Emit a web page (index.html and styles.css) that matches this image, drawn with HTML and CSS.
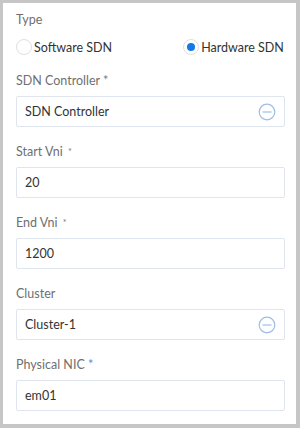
FILE: index.html
```html
<!DOCTYPE html>
<html lang="en">
<head>
    <meta charset="UTF-8">
    <meta name="viewport" content="width=device-width, initial-scale=1.0">
    <title>SDN Settings</title>
    <link rel="stylesheet" href="styles.css">
</head>
<body>
    <div class="panel">
        <div class="field field-type">
            <div class="label">Type</div>
            <div class="radio-row">
                <label class="radio">
                    <span class="radio-dot"></span>
                    <span class="radio-text">Software SDN</span>
                </label>
                <label class="radio checked">
                    <span class="radio-dot"></span>
                    <span class="radio-text">Hardware SDN</span>
                </label>
            </div>
        </div>

        <div class="field">
            <div class="label">SDN Controller <span class="req">*</span></div>
            <div class="input">
                <span class="value">SDN Controller</span>
                <svg class="clear-icon" width="18" height="18" viewBox="0 0 18 18">
                    <circle cx="9" cy="9" r="7.8" fill="none" stroke="#9fbde8" stroke-width="1.2"/>
                    <line x1="4.5" y1="9" x2="13.5" y2="9" stroke="#9fbde8" stroke-width="1.2"/>
                </svg>
            </div>
        </div>

        <div class="field">
            <div class="label">Start Vni <span class="req small">*</span></div>
            <div class="input"><span class="value">20</span></div>
        </div>

        <div class="field">
            <div class="label">End Vni <span class="req small">*</span></div>
            <div class="input"><span class="value">1200</span></div>
        </div>

        <div class="field">
            <div class="label">Cluster</div>
            <div class="input">
                <span class="value">Cluster-1</span>
                <svg class="clear-icon" width="18" height="18" viewBox="0 0 18 18">
                    <circle cx="9" cy="9" r="7.8" fill="none" stroke="#9fbde8" stroke-width="1.2"/>
                    <line x1="4.5" y1="9" x2="13.5" y2="9" stroke="#9fbde8" stroke-width="1.2"/>
                </svg>
            </div>
        </div>

        <div class="field">
            <div class="label">Physical NIC <span class="req blue">*</span></div>
            <div class="input"><span class="value">em01</span></div>
        </div>
    </div>
</body>
</html>
```

FILE: styles.css
```css
* {
    margin: 0;
    padding: 0;
    box-sizing: border-box;
}

body {
    font-family: Lato, 'Open Sans', sans-serif;
    font-size: 12.5px;
    background: #c6c6c6;
    height: 428px;
    overflow: hidden;
}

.panel {
    background: #ffffff;
    margin: 3px 4px 0 3px;
    height: 421px;
    padding: 9px 11px 0 13px;
}

.field {
    margin-bottom: 17px;
}

.field-type {
    margin-bottom: 18px;
}

.label {
    color: #6f6f6f;
    line-height: 16px;
    height: 16px;
    margin-bottom: 7px;
}

.req {
    color: #7a7a7a;
}

.req.small {
    font-size: 9px;
    vertical-align: 1px;
    margin-left: 2px;
}

.req.blue {
    color: #4a8ee8;
}

.radio-row {
    display: flex;
    gap: 71px;
    padding-top: 4px;
    height: 20px;
}

.radio {
    display: flex;
    align-items: center;
    gap: 2px;
    color: #333333;
}

.radio-dot {
    width: 16px;
    height: 16px;
    border: 1px solid #dcdfe4;
    border-radius: 50%;
    display: flex;
    align-items: center;
    justify-content: center;
}

.radio.checked .radio-dot::after {
    content: '';
    width: 8px;
    height: 8px;
    border-radius: 50%;
    background: #1677e8;
}

.input {
    height: 31px;
    border: 1px solid #dfe5ee;
    border-radius: 2px;
    display: flex;
    align-items: center;
    justify-content: space-between;
    padding: 0 8px 0 8px;
    color: #333333;
}

.clear-icon {
    display: block;
}
```
